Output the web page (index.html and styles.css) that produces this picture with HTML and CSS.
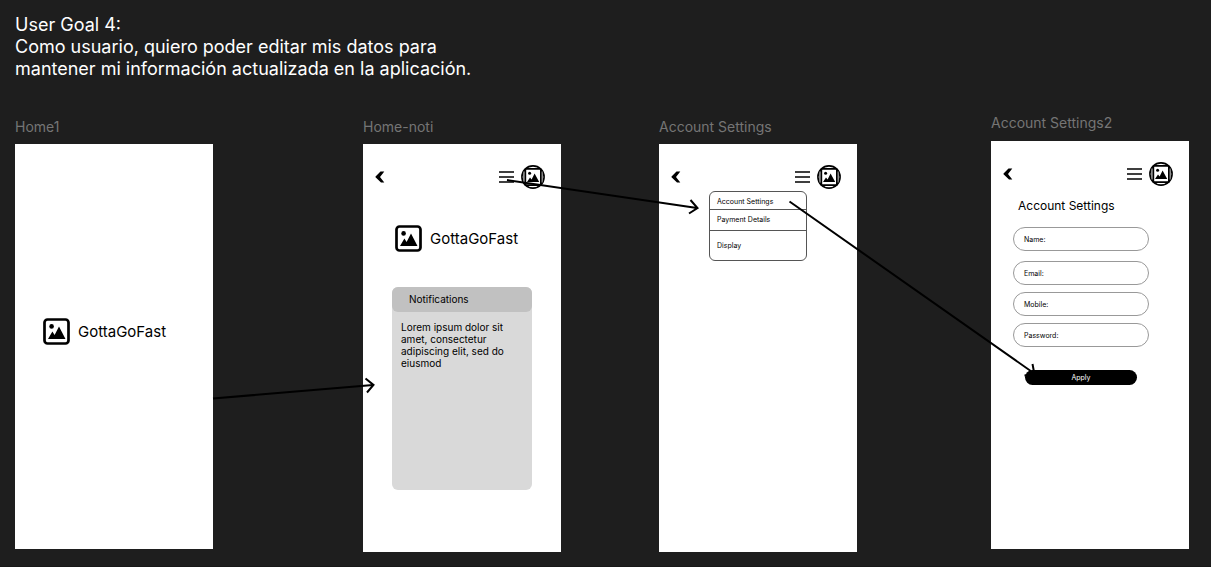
FILE: index.html
```html
<!DOCTYPE html>
<html lang="es">
<head>
<meta charset="utf-8">
<meta name="viewport" content="width=device-width, initial-scale=1">
<title>User Goal 4</title>
<link rel="stylesheet" href="styles.css">
</head>
<body>
<svg class="symbols" aria-hidden="true">
  <symbol id="picture" viewBox="0 0 27 27">
    <rect x="1.5" y="1.5" width="24" height="24" rx="3" fill="none" stroke="currentColor" stroke-width="2.7"/>
    <circle cx="8.6" cy="8.4" r="2.3" fill="currentColor"/>
    <path d="M5 21 9.4 13.5 11.6 17 16 8.5 22.5 21Z" fill="currentColor"/>
  </symbol>
  <symbol id="avatar" viewBox="0 0 24 24">
    <circle cx="12" cy="12" r="11.1" fill="none" stroke="currentColor" stroke-width="1.6"/>
    <rect x="4.3" y="3.8" width="15.6" height="16.4" rx="1" fill="none" stroke="currentColor" stroke-width="1.8"/>
    <path d="M2.7 6.500V17.500M21.300 6.500V17.500" stroke="#777" stroke-width="1"/>
    <circle cx="8.600" cy="8.300" r="1.500" fill="currentColor"/>
    <path d="M6 17 9 12.500 10.600 14.500 13.600 8.500 18.200 17Z" fill="currentColor"/>
  </symbol>
  <symbol id="back" viewBox="0 0 10 12">
    <path d="M5.500.5H9.300L5 6 9.300 11.500H6L.5 6.200V5.600Z" fill="currentColor"/>
  </symbol>
  <symbol id="menu" viewBox="0 0 16 12">
    <path d="M0 1H15M0 6H15M0 11H15" stroke="currentColor" stroke-width="1.500"/>
  </symbol>
</svg>

<main class="canvas">
  <h1 class="goal">User Goal 4:<br>Como usuario, quiero poder editar mis datos para<br>mantener mi información actualizada en la aplicación.</h1>

  <section class="node node-home">
    <h2 class="node-name">Home1</h2>
    <div class="screen screen-splash">
      <div class="brand"><svg class="brand-icon"><use href="#picture"/></svg><span>GottaGoFast</span></div>
    </div>
  </section>

  <section class="node node-noti">
    <h2 class="node-name">Home-noti</h2>
    <div class="screen screen-tall">
      <header class="topbar">
        <button class="icon-button" aria-label="Back"><svg class="icon-back"><use href="#back"/></svg></button>
        <div class="topbar-actions">
          <button class="icon-button" aria-label="Menu"><svg class="icon-menu"><use href="#menu"/></svg></button>
          <button class="icon-button" aria-label="Profile"><svg class="icon-avatar"><use href="#avatar"/></svg></button>
        </div>
      </header>
      <div class="brand brand-top"><svg class="brand-icon"><use href="#picture"/></svg><span>GottaGoFast</span></div>
      <article class="card">
        <h3 class="card-title">Notifications</h3>
        <p class="card-text">Lorem ipsum dolor sit amet, consectetur adipiscing elit, sed do eiusmod</p>
      </article>
    </div>
  </section>

  <section class="node node-menu">
    <h2 class="node-name">Account Settings</h2>
    <div class="screen screen-tall">
      <header class="topbar">
        <button class="icon-button" aria-label="Back"><svg class="icon-back"><use href="#back"/></svg></button>
        <div class="topbar-actions">
          <button class="icon-button" aria-label="Menu"><svg class="icon-menu"><use href="#menu"/></svg></button>
          <button class="icon-button" aria-label="Profile"><svg class="icon-avatar"><use href="#avatar"/></svg></button>
        </div>
      </header>
      <nav class="menu">
        <a class="menu-item" href="#account">Account Settings</a>
        <a class="menu-item" href="#payment">Payment Details</a>
        <a class="menu-item menu-item-large" href="#display">Display</a>
      </nav>
    </div>
  </section>

  <section class="node node-form" id="account">
    <h2 class="node-name">Account Settings2</h2>
    <div class="screen screen-tall">
      <header class="topbar">
        <button class="icon-button" aria-label="Back"><svg class="icon-back"><use href="#back"/></svg></button>
        <div class="topbar-actions">
          <button class="icon-button" aria-label="Menu"><svg class="icon-menu"><use href="#menu"/></svg></button>
          <button class="icon-button" aria-label="Profile"><svg class="icon-avatar"><use href="#avatar"/></svg></button>
        </div>
      </header>
      <form class="form">
        <h3 class="form-title">Account Settings</h3>
        <div class="field field-first"><label for="name">Name:</label><input id="name" type="text"></div>
        <div class="field"><label for="email">Email:</label><input id="email" type="email"></div>
        <div class="field"><label for="mobile">Mobile:</label><input id="mobile" type="tel"></div>
        <div class="field"><label for="password">Password:</label><input id="password" type="password"></div>
        <button class="apply" type="button">Apply</button>
      </form>
    </div>
  </section>

  <svg class="arrows" aria-hidden="true">
    <path d="M213 398.500 373 385M365.500 378.500 373.500 385 367 392.500"/>
    <path d="M507 180 697 208M690.500 200 697.500 208 689 213.500"/>
    <path d="M789.500 201.500 1035 374M1032.500 364 1034.500 374.500 1024.500 375.500"/>
  </svg>
</main>
</body>
</html>
```
FILE: styles.css
```css
* {
  box-sizing: border-box;
}

body {
  margin: 0;
  background: #1e1e1e;
  color: #000;
  font-family: Inter, "Liberation Sans", sans-serif;
}

h1, h2, h3, p {
  margin: 0;
  font-weight: 400;
}

button {
  padding: 0;
  border: 0;
  background: none;
  color: inherit;
  font: inherit;
  cursor: pointer;
}

.symbols {
  position: absolute;
  width: 0;
  height: 0;
}

.canvas {
  position: relative;
  min-height: 100vh;
  padding: 14px 15px;
  overflow: hidden;
  border-bottom: 1px solid #181818;
}

.goal {
  color: #fff;
  font-size: 18px;
  line-height: 22px;
}

/* Frames placed on the free canvas */
.node {
  position: absolute;
  top: 118px;
  width: 198px;
}

.node-home { left: 15px; }
.node-noti { left: 363px; }
.node-menu { left: 659px; }
.node-form { top: 114px; left: 991px; }

.node-name {
  padding-bottom: 8px;
  color: #757575;
  font-size: 14px;
  line-height: 18px;
  white-space: nowrap;
}

.node-form .node-name {
  padding-bottom: 9px;
}

.screen {
  min-height: 405px;
  background: #fff;
}

.screen-tall {
  min-height: 408px;
}

.screen-splash {
  display: flex;
  align-items: center;
  padding: 0 28px 30px;
}

.brand {
  display: flex;
  align-items: center;
  gap: 8px;
  font-size: 15px;
  line-height: 18px;
}

.brand-top {
  padding: 36px 32px 35px;
}

.brand-icon {
  width: 27px;
  height: 27px;
}

.topbar {
  display: flex;
  align-items: center;
  justify-content: space-between;
  padding: 21px 16px 0 12px;
}

.topbar-actions {
  display: flex;
  align-items: center;
  gap: 6px;
}

.icon-button {
  display: flex;
}

.icon-back {
  width: 10px;
  height: 12px;
}

.icon-menu {
  width: 16px;
  height: 12px;
}

.icon-avatar {
  width: 24px;
  height: 24px;
}

.card {
  min-height: 203px;
  margin: 0 29px;
  border-radius: 6px;
  background: #d9d9d9;
}

.card-title {
  padding: 6px 17px;
  border-radius: 6px;
  background: #c1c1c1;
  font-size: 10px;
  line-height: 13px;
}

.card-text {
  padding: 9px;
  font-size: 10px;
  line-height: 12px;
}

.menu {
  display: flex;
  flex-direction: column;
  margin: 2px 50px 0;
  border: 1px solid #555;
  border-radius: 6px;
}

.menu-item {
  padding: 5px 7px 3px;
  color: #000;
  font-size: 7px;
  line-height: 9px;
  text-decoration: none;
}

.menu-item + .menu-item {
  padding: 5px 7px 6px;
  border-top: 1px solid #555;
}

.menu-item + .menu-item-large {
  padding: 10px 7px;
}

.form {
  display: flex;
  flex-direction: column;
  gap: 7px;
  padding: 11px 40px 0 22px;
}

.form-title {
  padding: 0 5px 5px;
  font-size: 12px;
  line-height: 18px;
}

.field {
  display: flex;
  align-items: center;
  gap: 4px;
  height: 24px;
  padding: 0 11px 0 10px;
  border: 1px solid #999;
  border-radius: 12px;
  font-size: 7px;
}

.field-first {
  margin-bottom: 3px;
}

.field input {
  flex: 1;
  min-width: 0;
  padding: 0;
  border: 0;
  outline: 0;
  background: none;
  font: inherit;
}

.apply {
  height: 15px;
  margin: 16px 12px 0;
  border-radius: 8px;
  background: #000;
  color: #fff;
  font-size: 7px;
}

.arrows {
  position: absolute;
  top: 0;
  left: 0;
  width: 100%;
  height: 100%;
  fill: none;
  stroke: #000;
  stroke-width: 2;
  pointer-events: none;
}
```
